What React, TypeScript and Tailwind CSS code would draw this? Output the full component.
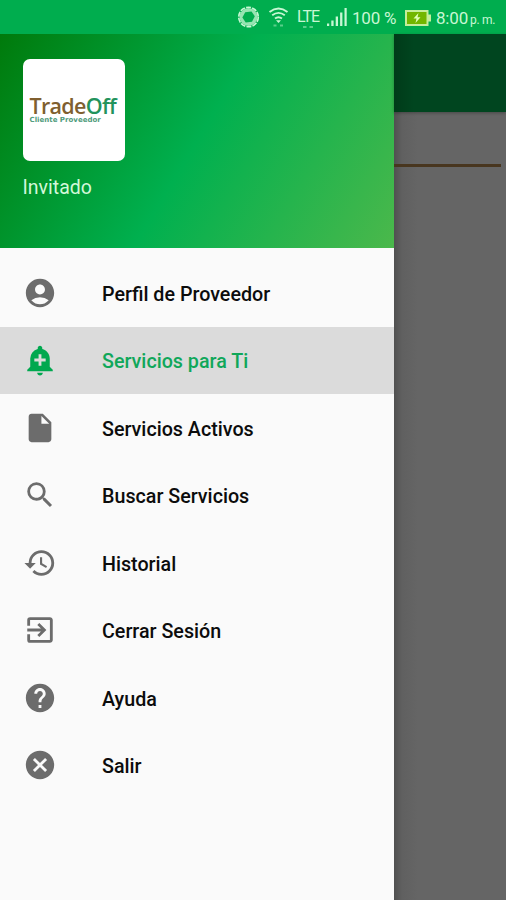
import React from 'react';
import type { IconType } from 'react-icons';
import {
  MdAccountCircle,
  MdAddAlert,
  MdCancel,
  MdExitToApp,
  MdHelp,
  MdHistory,
  MdInsertDriveFile,
  MdSearch,
} from 'react-icons/md';

interface MenuItem {
  id: string;
  label: string;
  icon: IconType;
}

const MENU_ITEMS: MenuItem[] = [
  { id: 'profile', label: 'Perfil de Proveedor', icon: MdAccountCircle },
  { id: 'for-you', label: 'Servicios para Ti', icon: MdAddAlert },
  { id: 'active', label: 'Servicios Activos', icon: MdInsertDriveFile },
  { id: 'search', label: 'Buscar Servicios', icon: MdSearch },
  { id: 'history', label: 'Historial', icon: MdHistory },
  { id: 'logout', label: 'Cerrar Sesión', icon: MdExitToApp },
  { id: 'help', label: 'Ayuda', icon: MdHelp },
  { id: 'exit', label: 'Salir', icon: MdCancel },
];

function StatusBar() {
  return (
    <div className="flex h-[34px] items-center bg-[#00ad4e] pl-[237px] text-[#c8f7d4]">
      {/* Sync ring: shaded band around a tilted square opening */}
      <svg className="h-[22px] w-[23px] shrink-0" viewBox="0 0 23 22">
        <circle cx="11.5" cy="11" r="9.8" fill="none" stroke="currentColor" strokeWidth="1.6" strokeDasharray="5 1.2" />
        <circle cx="11.5" cy="11" r="9" fill="currentColor" opacity="0.75" />
        <path d="M8.200 6.200l6.300-.7 3.300 4.800-2.800 5.500-6.300.7-3.300-5z" fill="#00ad4e" />
      </svg>

      {/* Wifi */}
      <svg className="ml-2 h-[22px] w-[21px] shrink-0" viewBox="0 0 21 22" fill="none" stroke="currentColor" strokeWidth="1.9">
        <path d="M1.500 6q9-7 18 0M4.200 9.300q6.300-4.800 12.600 0M7 12.500q3.500-2.600 7 0" />
        <path d="M8 14.300h5l-2.500 2.700z" fill="currentColor" stroke="none" />
        <path d="M5.500 19.500h3M12 19.500h3" strokeWidth="1.800" opacity="0.450" />
      </svg>

      {/* Mobile network */}
      <div className="ml-[8px] flex h-[24px] w-[22px] flex-col items-center">
        <span className="mt-[2px] text-[16px] leading-[19px] tracking-[-1px]">LTE</span>
        <svg className="h-[3px] w-[12px] shrink-0" viewBox="0 0 12 3" fill="currentColor" opacity="0.45">
          <path d="M1 0h3.500v2H1zM7.500 0h3.500v2H7.500z" />
        </svg>
      </div>
      <svg className="ml-[8px] h-[18px] w-[20px] shrink-0" viewBox="0 0 20 18" fill="currentColor">
        <path d="M0 15.500h2.200V18H0zM4.300 12.500h2.300V18H4.300zM8.700 8.500H11V18H8.700zM13.100 4.500h2.300V18h-2.300zM17.500 0h2.200v18h-2.200z" />
      </svg>
      <span className="ml-[5px] mt-px w-[44px] whitespace-nowrap text-[17px] leading-5 tracking-[-0.2px]">100 %</span>

      {/* Battery */}
      <svg className="ml-[8px] mt-px h-[18px] w-[27px] shrink-0" viewBox="0 0 27 18">
        <path d="M1 1h23.500v4.500H27v7h-2.500V17H1z" fill="#c5ee9a" />
        <path d="M3 3h19.500v12H3z" fill="#72b600" />
        <path d="M14.500 4l-5 5.500h3L11.500 14l5-5.800h-3z" fill="#e1ffb8" />
      </svg>
      <span className="ml-[5px] mt-[2px] w-[33px] whitespace-nowrap text-[17px] leading-5 tracking-[-0.2px]">8:00</span>
      <span className="ml-[1px] mt-[5px] whitespace-nowrap text-[12px] leading-4 tracking-[-0.3px]">p. m.</span>
    </div>
  );
}

function DrawerHeader() {
  return (
    <div className="h-[214px] bg-[linear-gradient(121deg,#007a0b_0%,#00b04f_50%,#4bb84b_100%)] pl-[22.5px] pt-[25px]">
      <div className="flex h-[102px] w-[102px] flex-col rounded-[7px] bg-white pl-[7px] pt-[37px]">
        <p className="whitespace-nowrap font-['Open_Sans',sans-serif] text-[21.5px] font-semibold leading-[20px] tracking-[-0.7px] text-[#805f2f]">
          Trade<span className="text-[#23935c]">Off</span>
        </p>
        <p className="whitespace-nowrap font-['DejaVu_Sans',sans-serif] text-[7px] font-bold leading-[8px] tracking-[0.02px] text-[#4f9b7c]">
          Cliente Proveedor
        </p>
      </div>
      <p className="mt-[15px] text-[19.500px] leading-6 text-[#d3f8d9]">Invitado</p>
    </div>
  );
}

export default function App() {
  const [selected, setSelected] = React.useState('for-you');

  return (
    <div className="flex h-[900px] w-[506px] flex-col overflow-hidden bg-[#646464] font-['Roboto',sans-serif]">
      <StatusBar />

      <div className="flex flex-1">
        {/* Drawer */}
        <aside className="w-[394px] shrink-0 bg-[#fafafa]">
          <DrawerHeader />
          <nav className="pt-[11px]">
            {MENU_ITEMS.map(({ id, label, icon: Icon }) => (
              <button
                key={id}
                onClick={() => setSelected(id)}
                className={`flex h-[67.5px] w-full items-center pl-[23px] text-left text-[19.7px] font-medium ${
                  selected === id ? 'bg-[#dbdbdb] text-[#10a75a]' : 'text-[#0c0c0c]'
                }`}
              >
                <Icon className={`h-[34px] w-[34px] ${selected === id ? 'text-[#00a84f]' : 'text-[#6c6c6c]'}`} />
                <span className="ml-[45px] mt-[4px]">{label}</span>
              </button>
            ))}
          </nav>
        </aside>

        {/* Dimmed page behind the drawer */}
        <main className="flex-1 bg-[linear-gradient(to_right,#505050_0,#606060_8px,#656565_24px)]">
          <div className="h-[78px] bg-[linear-gradient(to_right,#003b19_0,#00451f_20px)] shadow-[0_1px_3px_rgba(0,0,0,0.3)]" />
          <div className="mr-[5px] mt-[52px] h-[3px] bg-[#48361f]" />
        </main>
      </div>
    </div>
  );
}
